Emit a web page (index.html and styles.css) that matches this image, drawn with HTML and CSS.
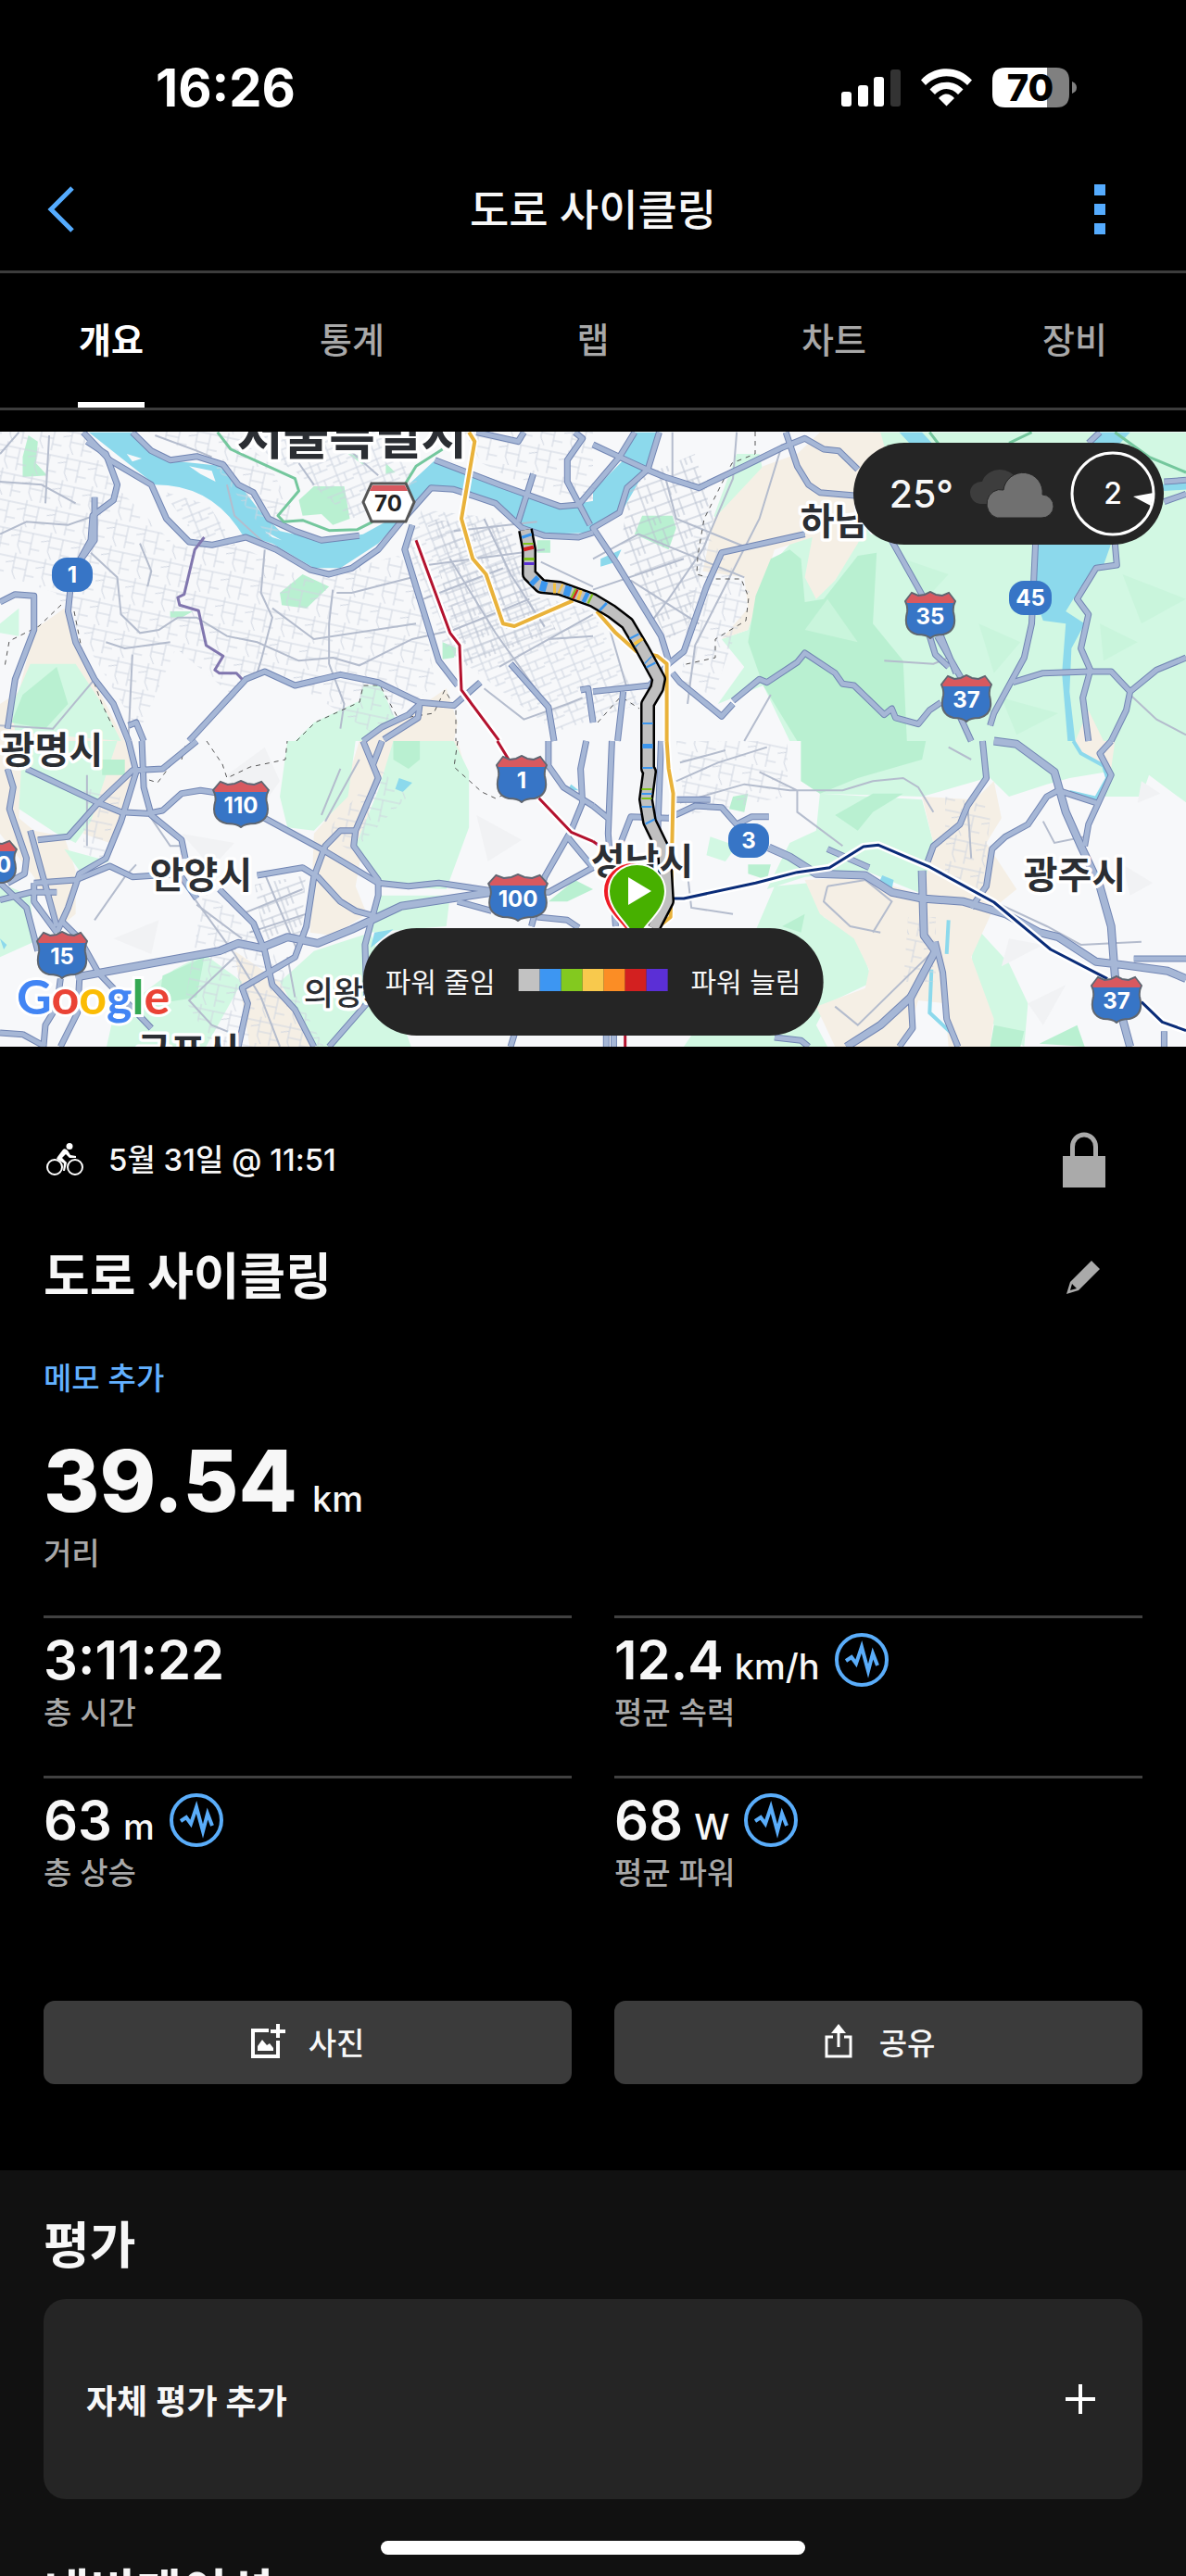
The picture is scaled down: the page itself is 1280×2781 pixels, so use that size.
FILE: index.html
```html
<!DOCTYPE html>
<html lang="ko">
<head>
  <meta charset="UTF-8">
  <title>도로 사이클링</title>
  <meta name="viewport" content="width=device-width, initial-scale=1">
  <link rel="stylesheet" href="styles.css">
</head>
<body>
<div class="screen">

  <!-- Status bar -->
  <div class="status-bar">
    <span class="clock">16:26</span>
    <svg class="status-icons" viewBox="908 70 256 48" aria-hidden="true">
      <g fill="#fff">
        <rect x="908" y="98" width="11" height="16" rx="3"/>
        <rect x="926" y="91" width="11" height="23" rx="3"/>
        <rect x="943" y="82" width="11" height="32" rx="3"/>
        <rect x="961" y="74" width="11" height="40" rx="3" fill="#333"/>
        <path d="M994 85.500C1009 69 1034 69 1049 85.500L1044 91C1031 78 1012 78 999 91Z"/>
        <path d="M1003.500 95.500C1013 85 1030 85 1039.500 95.500L1034 101C1027 93 1016 93 1009 101Z"/>
        <path d="M1013 105C1018 99 1025 99 1030 105L1021.500 113.500Z"/>
      </g>
      <path d="M1085 72H1130V115H1085Q1071 115 1071 101V86Q1071 72 1085 72Z" fill="#fff"/>
      <path d="M1130 72H1140Q1154 72 1154 86V101Q1154 115 1140 115H1130Z" fill="#808080"/>
      <path d="M1157 87Q1162 89 1162 93.500T1157 100Z" fill="#808080"/>
      <text x="1112" y="108" text-anchor="middle" class="battery-text">70</text>
    </svg>
  </div>

  <!-- Header -->
  <header class="header">
    <button class="icon-btn" aria-label="뒤로">
      <svg width="32" height="52" viewBox="0 0 32 52"><path d="M28 3L5 26L28 49" fill="none" stroke="#55acff" stroke-width="5"/></svg>
    </button>
    <h1>도로 사이클링</h1>
    <button class="icon-btn" aria-label="더보기">
      <svg width="12" height="54" viewBox="0 0 12 54" fill="#55acff"><path d="M0 0h12v12H0zM0 21h12v12H0zM0 42h12v12H0z"/></svg>
    </button>
  </header>

  <nav class="tabs">
    <a href="#" class="tab active">개요</a>
    <a href="#" class="tab">통계</a>
    <a href="#" class="tab">랩</a>
    <a href="#" class="tab">차트</a>
    <a href="#" class="tab">장비</a>
  </nav>

  <!-- Map -->
  <div class="map-box">
    <svg class="map" viewBox="0 466 1280 664">
      <defs>
        <pattern id="gridA" width="23" height="19" patternUnits="userSpaceOnUse" patternTransform="rotate(-22)">
          <path d="M0 4H23M7 0V19M15 4V13M7 13H23M0 10H7" fill="none" stroke="#ccd3df"/>
        </pattern>
        <pattern id="gridB" width="33" height="29" patternUnits="userSpaceOnUse" patternTransform="rotate(12)">
          <path d="M0 5H33M9 0V21L14 29M23 5V29M9 16H23M23 22H33M0 12L9 9" fill="none" stroke="#cfd5e0"/>
        </pattern>
        <pattern id="gridC" width="27" height="25" patternUnits="userSpaceOnUse" patternTransform="rotate(-20)">
          <path d="M0 6H27M7 0V25M18 6V25M0 17H27M12 17V25" fill="none" stroke="#b9c1d0"/>
        </pattern>
        <symbol id="shield" viewBox="0 0 56 52" preserveAspectRatio="none">
          <path d="M8 2L15 5L22 4L28 1L34 4L41 5L48 2L55 11Q52 17 53 23Q58 43 42 47Q32 47 28 51Q24 47 14 47Q-2 43 3 23Q4 17 1 11Z" fill="#3775c6" stroke="#5f6670" stroke-width="2"/>
          <path d="M8 3L15 6L22 5L28 2L34 5L41 6L48 3L54 11L53 13H3L2 11Z" fill="#d8595f"/>
        </symbol>
        <g id="roads">
          <g transform="translate(0 460) scale(.4082 .3333)">
            <path d="M220 20L290 110 400 190 440 300 500 375 560 385 650 360 730 400 820 465 870 480 930 460 1000 400 1060 310 1140 200 1200 205 1310 250 1380 330 1440 355 1530 360 1568 345"/>
            <path d="M350 20L400 80 450 110 520 98 590 125 630 190 670 215 710 300 780 340 850 370 950 355"/>
            <path d="M1150 110L1320 190 1480 260 1530 255 1568 200M1520 20L1540 40 1500 110 1500 180 1530 250 1560 320M1260 20L1370 50 1385 20M1410 155L1370 310"/>
            <path d="M230 50L280 90 310 190 300 240 245 290 240 370 190 480 180 600 200 700 250 820 300 900 340 1020"/>
            <path d="M0 570L40 545 90 550 90 660 40 820 20 980M250 230L250 370 215 430M340 970L360 960 380 1020"/>
            <path d="M500 1020L650 820 700 795 780 840 900 805 1000 830 1110 895 1200 905 1270 830"/>
            <path d="M1090 320L1070 400 1110 560 1160 760 1210 840M1110 900L1080 935 1010 975 960 1020M1110 900L1105 945 1015 1015M1350 770L1450 910 1465 1020M1568 960L1555 850 1535 855"/>
          </g>
          <g transform="translate(640 460) scale(.4082 .3333)">
            <path d="M110 20L70 100 0 200M175 20L145 140 90 200 70 280 0 330 60 440 120 560 180 680 200 760"/>
            <path d="M0 60L70 100 150 145 190 165 280 200 400 130 500 70 560 40 610 75 650 80 700 140"/>
            <path d="M510 20L540 130 570 190 600 215 720 228M560 350L340 410 300 520 240 730 200 770 150 840 0 860"/>
            <path d="M780 350L890 590 960 800M890 680L905 740 940 780M910 680L980 830"/>
            <path d="M1170 380L1160 640 1140 750 1060 930 1050 970M1380 380L1385 450 1330 460 1280 560 1310 610 1290 720 1315 790 1295 880 1310 1020"/>
            <path d="M1110 830L1190 800 1310 795 1370 795 1420 860 1490 790 1568 750M1420 860L1410 920 1370 1020"/>
            <path d="M920 895L890 920 860 965 800 945 790 915 770 935 690 840 660 835 640 800 560 735 540 765 460 830 440 820 370 890"/>
            <path d="M210 800L230 830 340 940 370 900M80 860L65 1020M970 940L1000 1020M1340 20L1310 55M1510 180L1568 175M1510 245L1568 220"/>
          </g>
          <g transform="translate(0 800) scale(.4082 .3333)">
            <path d="M70 90L260 200 320 230 390 235 430 225 480 170 530 160 640 180 700 250 850 350 1000 460 1080 470 1160 460 1300 485 1450 490 1568 410"/>
            <path d="M340 0L360 100 320 260 280 380 210 430 180 540 150 620M375 0L380 150 400 240 480 320 490 380M520 0L430 90 350 95 260 200 180 310 100 320"/>
            <path d="M20 90L35 150 25 220 70 380 65 430 20 460M80 290L150 600M90 460L200 450 290 405 350 440 480 430M0 515L80 490 150 490M0 460L70 540 100 680M90 460L90 520 150 620M160 580L210 640 260 750 400 930"/>
            <path d="M580 480L670 590 700 680 720 790 780 870 830 990"/>
            <path d="M480 440L520 510M680 435L800 410 840 440 900 520 940 550 1000 570M960 0L1000 120 940 290 935 340 1000 450 1000 500 965 660 970 850 870 990M1010 0L985 80M940 290L900 290 860 340 830 440 810 600 780 700 710 750 640 800 655 850 630 990"/>
            <path d="M160 770L150 860 120 920 115 990M210 770L205 880 160 990M0 945L60 950 120 990"/>
            <path d="M1450 0L1450 80 1490 150 1568 210M1550 0L1535 90 1540 200 1510 290 1440 440 1405 600M1420 570L1500 580 1530 605M1500 310L1568 410M1210 520L1300 550M1360 950L1350 990"/>
          </g>
          <g transform="translate(640 800) scale(.4082 .3333)">
            <path d="M50 0L40 300 60 600M180 0L170 330M0 210L40 250M70 340L100 245 200 250 270 210 340 215 390 285M380 270L420 245 465 245M205 190L310 190M35 940V990M55 940V990"/>
            <path d="M1030 0L1040 120 990 210 970 270 900 340 885 390M840 820L845 930 810 990M620 350L730 410M1430 705L1568 705M480 960L550 970 570 990M1510 940L1510 990"/>
            <path d="M1000 540L1040 470 1055 350 1090 310 1150 270 1200 180 1230 160 1330 200M1370 0L1340 40 1370 110 1310 270 1300 340M905 650L925 750 935 900 965 990"/>
          </g>
        </g>
        <g id="highways">
          <path transform="translate(0 800) scale(.4082 .3333)" d="M200 765L580 680 630 655 690 670 760 635 840 655 930 610 1060 535 1300 490"/>
          <path transform="translate(640 800) scale(.4082 .3333)" d="M465 345L520 375 590 430 720 435 790 490 870 510 980 520 1090 560 1180 620 1230 635 1330 715 1400 725 1520 745 1568 770M870 420L875 630 905 680 840 830 760 920 670 990M1060 0L1120 10 1220 100 1250 230 1290 340 1340 470 1370 600 1380 760 1400 900 1420 990"/>
        </g>
        <path id="ride" d="M567 572L571 593 571 620 584 633 604 635 640 648 660 660 677 673 693 700 711 733 709 743 699 760 699 830 701 833 697 863 701 887 717 920 720 973 705 1002"/>
      </defs>

      <rect y="466" width="1280" height="664" fill="#f7f8fa"/>

      <!-- land cover -->
      <g transform="translate(0 460) scale(.4082 .3333)">
        <path fill="#f5efe5" d="M90 660L170 590 230 780 330 1020H0V900L50 860ZM950 1020L1050 960 1180 850 1210 960 1200 1020Z"/>
        <path fill="#d2f8e3" d="M80 770L200 770 270 900 320 1020 40 990 30 910ZM780 1020L830 960 950 890 960 840 1005 840 1050 960 960 1020ZM0 640L50 590 50 680 0 670Z"/>
        <path fill="#b9f0d1" d="M60 100L75 30 100 50 95 120 125 160 60 165ZM790 240L830 195 910 195 925 300 880 320 850 285 800 290ZM740 540L800 480 870 520 810 590 745 580ZM1170 700L1210 720 1200 750 1170 755ZM450 600L510 600 480 620 450 620ZM1420 370L1455 370 1455 410 1420 410ZM920 90L980 100 960 125ZM1020 120L1045 150 1020 155ZM60 870L150 780 180 900 120 980 30 960Z"/>
        <path fill="#8cd9ec" d="M235 20L350 20 440 110 590 130 640 200 690 280 740 340 850 370 960 350 1020 310 1080 190 1150 110 1300 170 1480 260 1580 240V345L1420 350 1370 310 1310 250 1150 200 1060 300 1000 380 900 460 830 460 720 380 640 350Q560 190 410 190Z"/>
        <path fill="#f7f8fa" d="M335 90L375 105 350 115ZM500 130L560 145 570 180 530 155ZM700 340L745 370 720 360Z"/>
      </g>
      <g transform="translate(640 460) scale(.4082 .3333)">
        <path fill="#d2f8e3" d="M740 20H1580V1020H520L450 840 330 900 400 780 340 690 410 660 430 560 470 450 560 330ZM380 90H440L450 150 330 310 320 290Z"/>
        <path fill="#f5efe5" d="M600 20L760 20 790 150 700 380 640 500 590 560 560 490 580 360 480 400 450 520 410 660 340 690 410 590 400 490 290 470 320 300 450 130 540 90Z"/>
        <path fill="#b9f0d1" d="M470 430L520 400 550 430 560 570 610 560 700 420 750 410 740 640 820 760 830 1020H540L450 840 410 700 430 550ZM130 290L210 290 220 330 200 400 110 350Z"/>
        <path fill="#c9f5dc" d="M820 430L940 480 880 560ZM1020 640L1130 700 1060 800ZM1400 480L1568 560 1450 640ZM1080 880L1230 930 1120 1000ZM1340 640L1440 700 1350 760ZM620 560L700 700 560 660Z"/>
        <path fill="#8cd9ec" d="M100 20H180L140 140 70 290 0 330V210L80 110ZM1170 380H1370L1350 450 1290 520 1250 600 1300 640 1265 720 1260 860 1275 1020H1255L1240 800 1250 640 1190 630 1170 560ZM810 20H870L900 60H840ZM1330 20H1420L1390 60H1320ZM1500 190L1580 180V205L1510 210ZM20 430L75 400 60 440 20 455Z"/>
        <path fill="#f5efe5" d="M1275 1020L1310 920 1350 1020Z"/>
      </g>
      <g transform="translate(0 800) scale(.4082 .3333)">
        <path fill="#f5efe5" d="M0 0H60L50 250 90 290 170 310 200 420 200 560 160 600 90 440 0 300ZM260 0H340L350 180 290 330 220 300 260 180ZM950 0H1050L980 200 940 470 970 560 880 630 820 620 830 300 900 200ZM620 680L740 780 820 990H660ZM1200 0H1210L1230 90Z"/>
        <path fill="#d2f8e3" d="M60 0H310L240 260 200 330 150 300 50 220ZM760 0H940L920 180 830 290 760 280 740 180ZM1040 0L1200 0 1240 100V280L1180 480 1010 470 940 340 1000 160ZM0 460L80 500 90 650 0 700ZM540 690L460 740 300 890 280 1000H540L640 780ZM830 680L980 620 1090 1000H840L740 780ZM170 350L290 390 210 420ZM1000 500L1190 500 1180 600 980 620Z"/>
        <path fill="#b9f0d1" d="M1040 0H1110L1110 60 1080 90 1040 60ZM270 60H330V110H270ZM430 760L540 700 520 830 420 850ZM1450 520L1520 450 1568 480 1500 520Z"/>
        <path fill="#f1f2f4" d="M600 110L700 20 740 130 670 250ZM480 300L620 330 560 410ZM300 640L420 580 400 690ZM1260 240L1380 320 1290 390Z"/>
        <path fill="#8cd9ec" d="M1055 120L1090 135 1065 165 1045 155ZM990 620L1040 610 980 670ZM0 640L18 660 10 675ZM1510 140L1530 160 1500 160Z"/>
      </g>
      <g transform="translate(640 800) scale(.4082 .3333)">
        <path fill="#d2f8e3" d="M550 0H1030L1040 120 870 180 600 170 550 130ZM1000 0H1290L1360 100 1260 120 1200 140 1100 180 1050 120ZM1370 0H1580V210L1470 110 1450 180 1350 180ZM600 170L870 190 900 330 880 500 720 420 560 440 460 480 520 330 590 290ZM480 470L570 460 610 570 700 640 740 780 620 850 590 920 620 990H240L400 700ZM1010 600L1100 720 1150 850 1140 990 1060 920 1000 720ZM310 310L380 340 350 390 300 370Z"/>
        <path fill="#f5efe5" d="M870 180L1010 190 1060 130 1080 250 1040 330 1120 480 1060 540 1000 700 1060 900 1050 990H640L590 860 720 800 730 740 690 640 600 560 560 450 720 440 870 500 900 330ZM1270 0H1380L1370 90 1300 50Z"/>
        <path fill="#f7f8fa" d="M860 840L930 850 940 990H820Z"/>
        <path fill="#b9f0d1" d="M550 0H880L870 60 700 120 600 170 550 130ZM640 240L740 170 820 170 740 230 700 290ZM370 180L410 170 400 230 360 220ZM410 400L470 400 460 450 410 430ZM1060 920L1140 940 1130 990H1050ZM1180 980L1280 920 1300 990ZM500 600L560 560 550 620Z"/>
        <path fill="#f1f2f4" d="M1100 640L1190 660 1080 730ZM1150 850L1250 790 1190 920ZM1400 400L1480 460 1420 500ZM1450 130L1500 170 1440 200Z"/>
        <path fill="none" stroke="#8cd9ec" stroke-width="4" d="M1270 0L1290 40 1350 80 1360 120 1330 185 1260 165M940 580L935 690M895 740L890 880 960 960"/>
        <path fill="#8cd9ec" d="M765 435L795 450 790 480 755 460Z"/>
      </g>

      <!-- small streets -->
      <path fill="url(#gridB)" d="M0 466H92L120 520 190 590 260 590 330 625 430 600 450 620 470 740 400 790 290 720 250 750 190 700 150 790 60 640 0 620ZM160 466H250L290 500 320 560 290 580 230 500Z"/>
      <path fill="url(#gridA)" d="M175 530L225 545 255 590 215 585ZM250 466H410L450 520 380 560 320 510ZM455 550L540 560 570 640 640 660 690 760 600 790 480 700 440 590Z"/>
      <path fill="url(#gridC)" d="M460 560L550 570 580 640 600 680 500 720ZM680 520L750 490 770 560 740 680 720 690 670 590ZM275 955L330 945 325 1010 285 1015Z"/>
      <path fill="url(#gridB)" d="M500 466H640V540L580 530 520 500ZM750 560L810 640 770 750 735 740ZM410 830L440 860 380 920 350 900ZM220 960L290 1020 350 1130H230L200 1080ZM730 800L850 800V860L740 880ZM1020 860L1070 870 1060 960 1020 950ZM980 990H1010V1060H975ZM90 850L130 860 110 930 90 920Z"/>
      <g fill="none" stroke="#b4bccd" stroke-width="2">
        <g transform="translate(0 460) scale(.4082 .3333)">
          <path d="M50 20L0 90M130 30L120 250M0 180L110 190 200 250M0 350L70 310 180 320 250 290M240 410L310 490 320 610 370 670 420 660 470 620 520 620 600 680 680 700 790 760 880 750 950 775 1090 690 1200 660 1400 560M370 380L400 470 390 520M350 740L340 1000M0 970L140 980 250 820M280 700L330 720 450 700M700 400L690 540 720 620 690 760 680 800M880 530L870 640 870 770 910 900 900 980M890 540L930 540 1090 490M720 590L830 690 1100 640M1280 850L1385 950 1500 900 1540 880M1450 910L1310 670 1190 430M1280 300L1350 480 1440 650M1430 440L1568 520M1450 690L1568 680M1200 340L1420 310M1130 450L1440 400M1120 560L1330 460M1320 780L1568 610M410 30L520 80 560 100M880 30L1000 160M790 120L830 190M600 190L620 290 700 380"/>
        </g>
        <g transform="translate(640 460) scale(.4082 .3333)">
          <path d="M380 20L370 170 290 400 200 560 150 640M500 60L440 300 270 710 250 900M190 160L220 300 400 390M0 430L120 350 400 490M0 530L240 430M100 500L280 640M210 170V20M40 640L90 850M470 870L400 1020M770 760L900 770 940 750M1420 870L1490 950 1568 1000"/>
        </g>
        <g transform="translate(0 800) scale(.4082 .3333)">
          <path d="M490 470L620 690 690 830 740 990M700 430L790 690M640 560L800 480M660 620L810 560M520 530L640 640M400 250L450 340 490 340M620 700L500 840 560 920 640 960M230 110L230 340M900 90L850 240M950 60L860 260M360 400L330 440 250 580M760 700L780 830"/>
        </g>
        <g transform="translate(640 800) scale(.4082 .3333)">
          <path d="M220 130L330 70 460 20M230 200L400 140 520 160 660 160 740 130 820 120 860 150 900 230M230 70L350 30M440 100L540 160 540 230 660 340M620 470L720 450 790 520 740 620M620 470L610 520 680 600 760 620M640 860L700 920 900 680M990 200L1000 380M1060 520L1200 600 1290 660 1450 650M1190 260L1220 330 1300 310M1000 60L940 20M250 430L260 540 370 560"/>
        </g>
      </g>
      <g fill="none" stroke="#555" stroke-dasharray="5 5">
        <path d="M66 653L42 676 10 692 5 720M80 660L88 700 110 760 122 785M320 800L340 780 388 758 392 740 410 740 430 776 468 770 480 745 492 765 492 800"/>
        <path d="M815 466V490L790 500 760 560 753 600 752 620 770 625 800 625 808 645 805 670 772 690 772 710 736 718M223 800L240 825 245 840 270 828 308 820 310 800M494 800L490 828 520 855 535 862 560 850M196 820L200 805 170 845 155 840M645 780L670 752 690 765"/>
      </g>

      <!-- motorways -->
      <g fill="none" stroke-linejoin="round">
        <use href="#roads" stroke="#7185b3" stroke-width="7"/>
        <use href="#highways" stroke="#7185b3" stroke-width="9"/>
        <use href="#roads" stroke="#a6b7d6" stroke-width="5"/>
        <use href="#highways" stroke="#a6b7d6" stroke-width="7"/>
      </g>
      <!-- rail lines -->
      <g fill="none" stroke-linejoin="round">
        <g transform="translate(0 460) scale(.4082 .3333)">
          <path class="halo" d="M1100 370L1190 670 1215 710 1220 855 1320 1020M1240 20L1255 50 1220 300 1250 430 1285 480 1330 640 1360 648 1515 565"/>
          <path stroke="#74c79d" stroke-width="3" d="M575 20L610 75 780 170 790 210 735 290 750 310 800 305 870 338 945 335 985 310M1070 190L1100 130 1170 75"/>
          <path stroke="#8076ae" stroke-width="3" d="M540 360L515 400 487 545 470 555 475 580 525 598 545 710 590 745 568 790 580 800 625 800 640 820"/>
          <path stroke="#b3122e" stroke-width="3" d="M1100 370L1190 670 1215 710 1220 855 1320 1020"/>
          <path stroke="#e9b23a" stroke-width="4" d="M1240 20L1255 50 1220 300 1250 430 1285 480 1330 640 1360 648 1515 565"/>
        </g>
        <g transform="translate(640 460) scale(.4082 .3333)">
          <path stroke="#74c79d" stroke-width="3" d="M890 20L915 60M1100 55L1160 20M1380 20L1470 100 1568 150"/>
          <path class="halo" d="M10 600L60 670 115 730 170 745 195 770V1020"/>
          <path stroke="#e9b23a" stroke-width="4" d="M10 600L60 670 115 730 170 745 195 770V1020"/>
        </g>
        <g transform="translate(0 800) scale(.4082 .3333)">
          <path class="halo" d="M1315 0L1345 60M1425 185L1510 295 1568 325"/>
          <path stroke="#b3122e" stroke-width="3" d="M1315 0L1345 60M1425 185L1510 295 1568 325"/>
        </g>
        <g transform="translate(640 800) scale(.4082 .3333)">
          <path class="halo" d="M195 0L200 90 212 170 205 570 170 605M205 510L240 510 430 460 540 425 625 410 715 342 755 337 890 408 1060 522 1210 675 1360 770M1450 845L1505 910 1568 938"/>
          <path stroke="#b3122e" stroke-width="3" d="M0 325L40 360M85 940V990"/>
          <path stroke="#e9b23a" stroke-width="4" d="M195 0L200 90 212 170 205 570 170 605"/>
          <path stroke="#0a2c78" stroke-width="3" d="M205 510L240 510 430 460 540 425 625 410 715 342 755 337 890 408 1060 522 1210 675 1360 770M1450 845L1505 910 1568 938"/>
        </g>
        <!-- recorded ride, coloured by power -->
        <use href="#ride" stroke="#000" stroke-width="16"/>
        <use href="#ride" stroke="#c0c0c0" stroke-width="11"/>
        <g stroke-width="11">
          <path stroke="#3b96ee" d="M568 577L569 580M575 625L579 629M583 632L590 634M609 637L616 639M630 644L634 646M650 654L652 656M684 686L685 688M689 694L690 695M699 712L700 713M702 717L703 719M699 780V782M699 803V808M699 828V830M698 856V858M698 870V872M701 886L702 888"/>
          <path stroke="#7fc41c" d="M570 586L570 588M571 602V605M618 640L620 641M636 646L638 647M698 851V853M698 861V863"/>
          <path stroke="#d21f1f" d="M570 590L571 594M620 641L622 642"/>
          <path stroke="#f5c243" d="M597 635L600 635M604 635L606 636M624 642L627 643M688 691L690 694"/>
          <path stroke="#5a2fd4" d="M571 607V610"/>
        </g>
      </g>

      <!-- road shields -->
      <path d="M401 522H438L447 542 438 563H401L392 542Z" fill="#fff" stroke="#555" stroke-width="3"/>
      <path d="M402 524H437L440 530H399Z" fill="#d8595f"/>
      <g fill="#3775c6">
        <rect x="56" y="602" width="44" height="37" rx="16"/>
        <rect x="1089" y="627" width="46" height="37" rx="16"/>
        <rect x="786" y="889" width="44" height="37" rx="16"/>
      </g>
      <use href="#shield" x="229" y="842" width="62" height="52"/>
      <use href="#shield" x="535" y="815" width="56" height="52"/>
      <use href="#shield" x="526" y="943" width="66" height="52"/>
      <use href="#shield" x="39" y="1005" width="56" height="52"/>
      <use href="#shield" x="-43" y="906" width="62" height="52"/>
      <use href="#shield" x="976" y="638" width="56" height="52"/>
      <use href="#shield" x="1015" y="728" width="56" height="52"/>
      <use href="#shield" x="1177" y="1053" width="56" height="52"/>
      <g class="shield-text">
        <text x="419" y="552" fill="#222">70</text>
        <text x="78" y="629">1</text>
        <text x="1112" y="654">45</text>
        <text x="808" y="916">3</text>
        <text x="260" y="878">110</text>
        <text x="563" y="851">1</text>
        <text x="559" y="979">100</text>
        <text x="67" y="1041">15</text>
        <text x="4" y="942">0</text>
        <text x="1004" y="674">35</text>
        <text x="1043" y="764">37</text>
        <text x="1205" y="1089">37</text>
      </g>

      <!-- city names -->
      <g class="city">
        <text x="380" y="491" class="city-big">서울특별시</text>
        <text x="56" y="824">광명시</text>
        <text x="217" y="959">안양시</text>
        <text x="919" y="577">하남시</text>
        <text x="693" y="944">성남시</text>
        <text x="1160" y="959">광주시</text>
        <text x="203" y="1149">군포시</text>
        <text x="376" y="1085" class="city-small">의왕시</text>
      </g>
      <text x="18" y="1095" class="google"><tspan fill="#4285f4">G</tspan><tspan fill="#ea4335">o</tspan><tspan fill="#fbbc05">o</tspan><tspan fill="#4285f4">g</tspan><tspan fill="#34a853">l</tspan><tspan fill="#ea4335">e</tspan></text>

      <!-- finish and start pins -->
      <path d="M684 1018C676 998 651 986 651 962A32 31 0 0 1 715 962C715 986 692 998 684 1018Z" fill="#ee1c25" stroke="#fff" stroke-width="2"/>
      <path d="M687 1018C682 998 657 986 657 962A30.500 29 0 0 1 718 962C718 986 692 998 687 1018Z" fill="#47b000" stroke="#fff" stroke-width="2"/>
      <path d="M678 947V977L703 962Z" fill="#fff"/>
    </svg>

    <div class="weather">
      <span class="temp">25°</span>
      <svg width="92" height="52" viewBox="0 0 92 52" aria-hidden="true">
        <path d="M12 37A12 12 0 0 1 14 13A20 18 0 0 1 52 12V37Z" fill="#3d3d3d"/>
        <path d="M30 52A14 15 0 1 1 37 22A20 20 0 0 1 79 27A12.500 12.500 0 0 1 78 52Z" fill="#707070" stroke="#252525" stroke-width="1"/>
      </svg>
      <svg width="92" height="92" viewBox="0 0 92 92">
        <circle cx="46" cy="46" r="44" fill="none" stroke="#fff" stroke-width="3"/>
        <path d="M68 49L90 45L87 59Z" fill="#fff"/>
        <text x="46" y="57" text-anchor="middle" class="wind">2</text>
      </svg>
    </div>

    <div class="legend">
      <span>파워 줄임</span>
      <span class="scale"><i class="c1"></i><i class="c2"></i><i class="c3"></i><i class="c4"></i><i class="c5"></i><i class="c6"></i><i class="c7"></i></span>
      <span>파워 늘림</span>
    </div>
  </div>

  <!-- Activity summary -->
  <main class="summary">
    <div class="row date-row">
      <svg width="42" height="36" viewBox="0 0 42 36" aria-hidden="true">
        <g fill="none" stroke="#fff" stroke-width="2"><circle cx="10" cy="26" r="8"/><circle cx="32" cy="26" r="8"/></g>
        <circle cx="26" cy="3.500" r="3.500" fill="#fff"/>
        <path d="M13 15L19 7Q21 5 24 8L27 13L33 14V16H26L22 12L18 16L23 21L21 30H19L20 22L12 17Z" fill="#fff"/>
      </svg>
      <span class="date">5월 31일 @ 11:51</span>
      <svg class="end lock" width="46" height="60" viewBox="0 0 46 60" aria-hidden="true">
        <path d="M0 26H46V60H0Z" fill="#aaa"/>
        <path d="M10.500 27V16A12.500 13 0 0 1 35.500 16V27" fill="none" stroke="#aaa" stroke-width="5"/>
      </svg>
    </div>

    <div class="row title-row">
      <h2>도로 사이클링</h2>
      <button class="icon-btn end pencil" aria-label="이름 편집">
        <svg width="36" height="36" viewBox="0 0 36 36"><path d="M27 0L36 9L13 32L0 36L4 23ZM6 25L4 32L11 30Z" fill="#aaa" fill-rule="evenodd"/></svg>
      </button>
    </div>

    <a href="#" class="memo">메모 추가</a>

    <div class="distance"><b>39.54</b><span class="unit">km</span></div>
    <div class="label">거리</div>

    <div class="stats">
      <div class="stat">
        <div class="value"><b>3:11:22</b></div>
        <div class="label">총 시간</div>
      </div>
      <div class="stat">
        <div class="value"><b>12.4</b><span class="unit">km/h</span>
          <svg class="pulse" viewBox="0 0 58 58"><circle cx="29" cy="29" r="27"/><path d="M12 30L18 26L23 33L29 15L36 41L41 22L46 35"/></svg>
        </div>
        <div class="label">평균 속력</div>
      </div>
      <div class="stat">
        <div class="value"><b>63</b><span class="unit">m</span>
          <svg class="pulse" viewBox="0 0 58 58"><circle cx="29" cy="29" r="27"/><path d="M12 30L18 26L23 33L29 15L36 41L41 22L46 35"/></svg>
        </div>
        <div class="label">총 상승</div>
      </div>
      <div class="stat">
        <div class="value"><b>68</b><span class="unit">W</span>
          <svg class="pulse" viewBox="0 0 58 58"><circle cx="29" cy="29" r="27"/><path d="M12 30L18 26L23 33L29 15L36 41L41 22L46 35"/></svg>
        </div>
        <div class="label">평균 파워</div>
      </div>
    </div>

    <div class="actions">
      <button class="action">
        <svg width="37" height="38" viewBox="0 0 37 38"><path d="M19 7H2V35H29V18" fill="none" stroke="#fff" stroke-width="4"/><path d="M29 0V15M21 8H37" stroke="#fff" stroke-width="4"/><path d="M7 29V24L12 17L17 23L20 21L24 26V29Z" fill="#fff"/></svg>
        사진
      </button>
      <button class="action">
        <svg width="37" height="38" viewBox="0 0 37 38"><path d="M12 14H5V35H31V14H24M18 25V4" fill="none" stroke="#fff" stroke-width="3"/><path d="M10 10L18 0L26 10Z" fill="#fff"/></svg>
        공유
      </button>
    </div>
  </main>

  <!-- Rating -->
  <section class="rating">
    <h2>평가</h2>
    <button class="rating-card">
      자체 평가 추가
      <svg width="32" height="32" viewBox="0 0 32 32"><path d="M16 0V32M0 16H32" stroke="#fff" stroke-width="4"/></svg>
    </button>
    <h2>내비게이션</h2>
  </section>

  <div class="home-bar"></div>
</div>
</body>
</html>
```
FILE: styles.css
```css
* {
  box-sizing: border-box;
}

body {
  margin: 0;
  background: #000;
  color: #f7f7f7;
  font-family: Inter, "Noto Sans CJK KR", sans-serif;
}

h1, h2 {
  margin: 0;
}

button {
  font-family: inherit;
  color: inherit;
  border: none;
  background: none;
  padding: 0;
  cursor: pointer;
}

a {
  text-decoration: none;
}

svg {
  display: block;
  flex-shrink: 0;
}

.screen {
  position: relative;
  display: flex;
  flex-direction: column;
  height: 100vh;
  overflow: hidden;
}

/* Status bar */
.status-bar {
  display: flex;
  flex-shrink: 0;
  justify-content: space-between;
  align-items: center;
  height: 164px;
  padding: 26px 116px 0 168px;
}

.clock {
  color: #fff;
  font-size: 56px;
  font-weight: 700;
}

.status-icons {
  width: 256px;
  height: 48px;
}

.battery-text {
  font-size: 40px;
  font-weight: 800;
}

/* Header */
.header {
  display: flex;
  flex-shrink: 0;
  align-items: center;
  justify-content: space-between;
  height: 131px;
  padding: 0 87px 4px 50px;
  border-bottom: 3px solid #3c3c3c;
}

.header h1 {
  flex: 1;
  padding-left: 17px;
  text-align: center;
  font-size: 46px;
  line-height: 60px;
  font-weight: 500;
}

/* Tabs */
.tabs {
  display: flex;
  flex-shrink: 0;
  justify-content: space-between;
  height: 148px;
  margin-bottom: 23px;
  padding: 0 84px;
  border-bottom: 3px solid #3c3c3c;
}

.tab {
  width: 72px;
  border-bottom: 6px solid transparent;
  color: #a8a8a8;
  font-size: 38px;
  font-weight: 500;
  line-height: 145px;
  text-align: center;
}

.tab.active {
  border-color: #fff;
  color: #fff;
  font-weight: 700;
}

/* Map */
.map-box {
  position: relative;
  flex-shrink: 0;
}

.map {
  width: 100%;
}

.map path {
  vector-effect: non-scaling-stroke;
}

.halo {
  stroke: #fff;
  stroke-width: 8px;
}

.shield-text {
  fill: #fff;
  font-size: 24px;
  font-weight: 700;
  text-anchor: middle;
}

.city {
  fill: #2b2e33;
  stroke: #fff;
  stroke-width: 7px;
  stroke-linejoin: round;
  paint-order: stroke;
  font-size: 40px;
  font-weight: 700;
  text-anchor: middle;
}

.city-big {
  font-size: 54px;
}

.city-small {
  font-size: 35px;
  font-weight: 500;
}

.google {
  font-family: Lato, sans-serif;
  font-size: 52px;
  font-weight: 700;
  stroke: #fff;
  stroke-width: 6px;
  paint-order: stroke;
}

.weather {
  position: absolute;
  top: 12px;
  right: 24px;
  display: flex;
  align-items: center;
  gap: 17px;
  height: 110px;
  padding: 0 9px 0 39px;
  border-radius: 55px;
  background: #252525;
}

.temp {
  font-size: 41px;
  font-weight: 500;
}

.wind {
  fill: #fff;
  font-size: 32px;
  font-weight: 500;
}

.legend {
  position: absolute;
  left: 50%;
  bottom: 12px;
  display: flex;
  align-items: center;
  gap: 25px;
  height: 116px;
  padding: 0 24px 4px;
  border-radius: 58px;
  background: #252525;
  font-size: 30px;
  white-space: nowrap;
  transform: translateX(-50%);
}

.scale {
  display: flex;
}

.scale i {
  width: 23px;
  height: 24px;
}

.c1 { background: #c2c2c2; }
.c2 { background: #3d96f2; }
.c3 { background: #83c91f; }
.c4 { background: #f8c94d; }
.c5 { background: #fb8d25; }
.c6 { background: #d32020; }
.c7 { background: #5b2fd6; }

/* Activity summary */
.summary {
  flex-shrink: 0;
  padding: 80px 47px 93px;
}

.row {
  display: flex;
  align-items: center;
}

.end {
  margin-left: auto;
}

.date-row {
  height: 84px;
  padding-left: 2px;
}

.date {
  margin-left: 26px;
  padding-bottom: 4px;
  font-size: 33px;
  font-weight: 500;
}

.lock {
  margin-right: 40px;
}

.title-row {
  height: 170px;
}

.rating h2,
.title-row h2 {
  font-size: 54px;
  font-weight: 700;
  line-height: 80px;
}

.pencil {
  margin-right: 46px;
}

.memo {
  display: block;
  color: #62b0ff;
  font-size: 33px;
  font-weight: 500;
  line-height: 48px;
}

.distance {
  display: flex;
  align-items: baseline;
  gap: 16px;
  height: 110px;
  margin-top: 31px;
  line-height: 112px;
}

.distance b {
  font-size: 92px;
  font-weight: 800;
}

.unit {
  font-size: 38px;
  font-weight: 500;
}

.label {
  color: #a8a8a8;
  font-size: 33px;
  font-weight: 500;
  line-height: 48px;
}

.stats {
  display: grid;
  grid-template-columns: 1fr 1fr;
  column-gap: 46px;
  margin-top: 43px;
}

.stat {
  height: 173px;
  padding-top: 15px;
  border-top: 3px solid #414141;
}

.value {
  display: flex;
  align-items: baseline;
  gap: 12px;
  height: 60px;
  margin-bottom: 3px;
  line-height: 60px;
}

.value b {
  font-size: 58px;
  font-weight: 600;
}

.pulse {
  align-self: center;
  width: 58px;
  height: 58px;
  margin-left: 4px;
  fill: none;
  stroke: #5aadfa;
  stroke-width: 4px;
}

.actions {
  display: grid;
  grid-template-columns: 1fr 1fr;
  gap: 46px;
  margin-top: 70px;
}

.action {
  display: flex;
  align-items: center;
  justify-content: center;
  gap: 25px;
  height: 90px;
  padding-bottom: 2px;
  border-radius: 12px;
  background: #3b3b3b;
  font-size: 33px;
  font-weight: 500;
}

/* Rating */
.rating {
  flex: 1;
  padding: 42px 47px 0;
  background: #111;
}

.rating-card {
  display: flex;
  align-items: center;
  justify-content: space-between;
  width: 100%;
  height: 216px;
  margin: 17px 0 62px;
  padding: 0 51px 0 46px;
  border-radius: 24px;
  background: #252525;
  font-size: 36px;
  font-weight: 600;
}

.home-bar {
  position: absolute;
  left: 50%;
  bottom: 23px;
  width: 458px;
  height: 15px;
  border-radius: 8px;
  background: #fff;
  transform: translateX(-50%);
}
```
